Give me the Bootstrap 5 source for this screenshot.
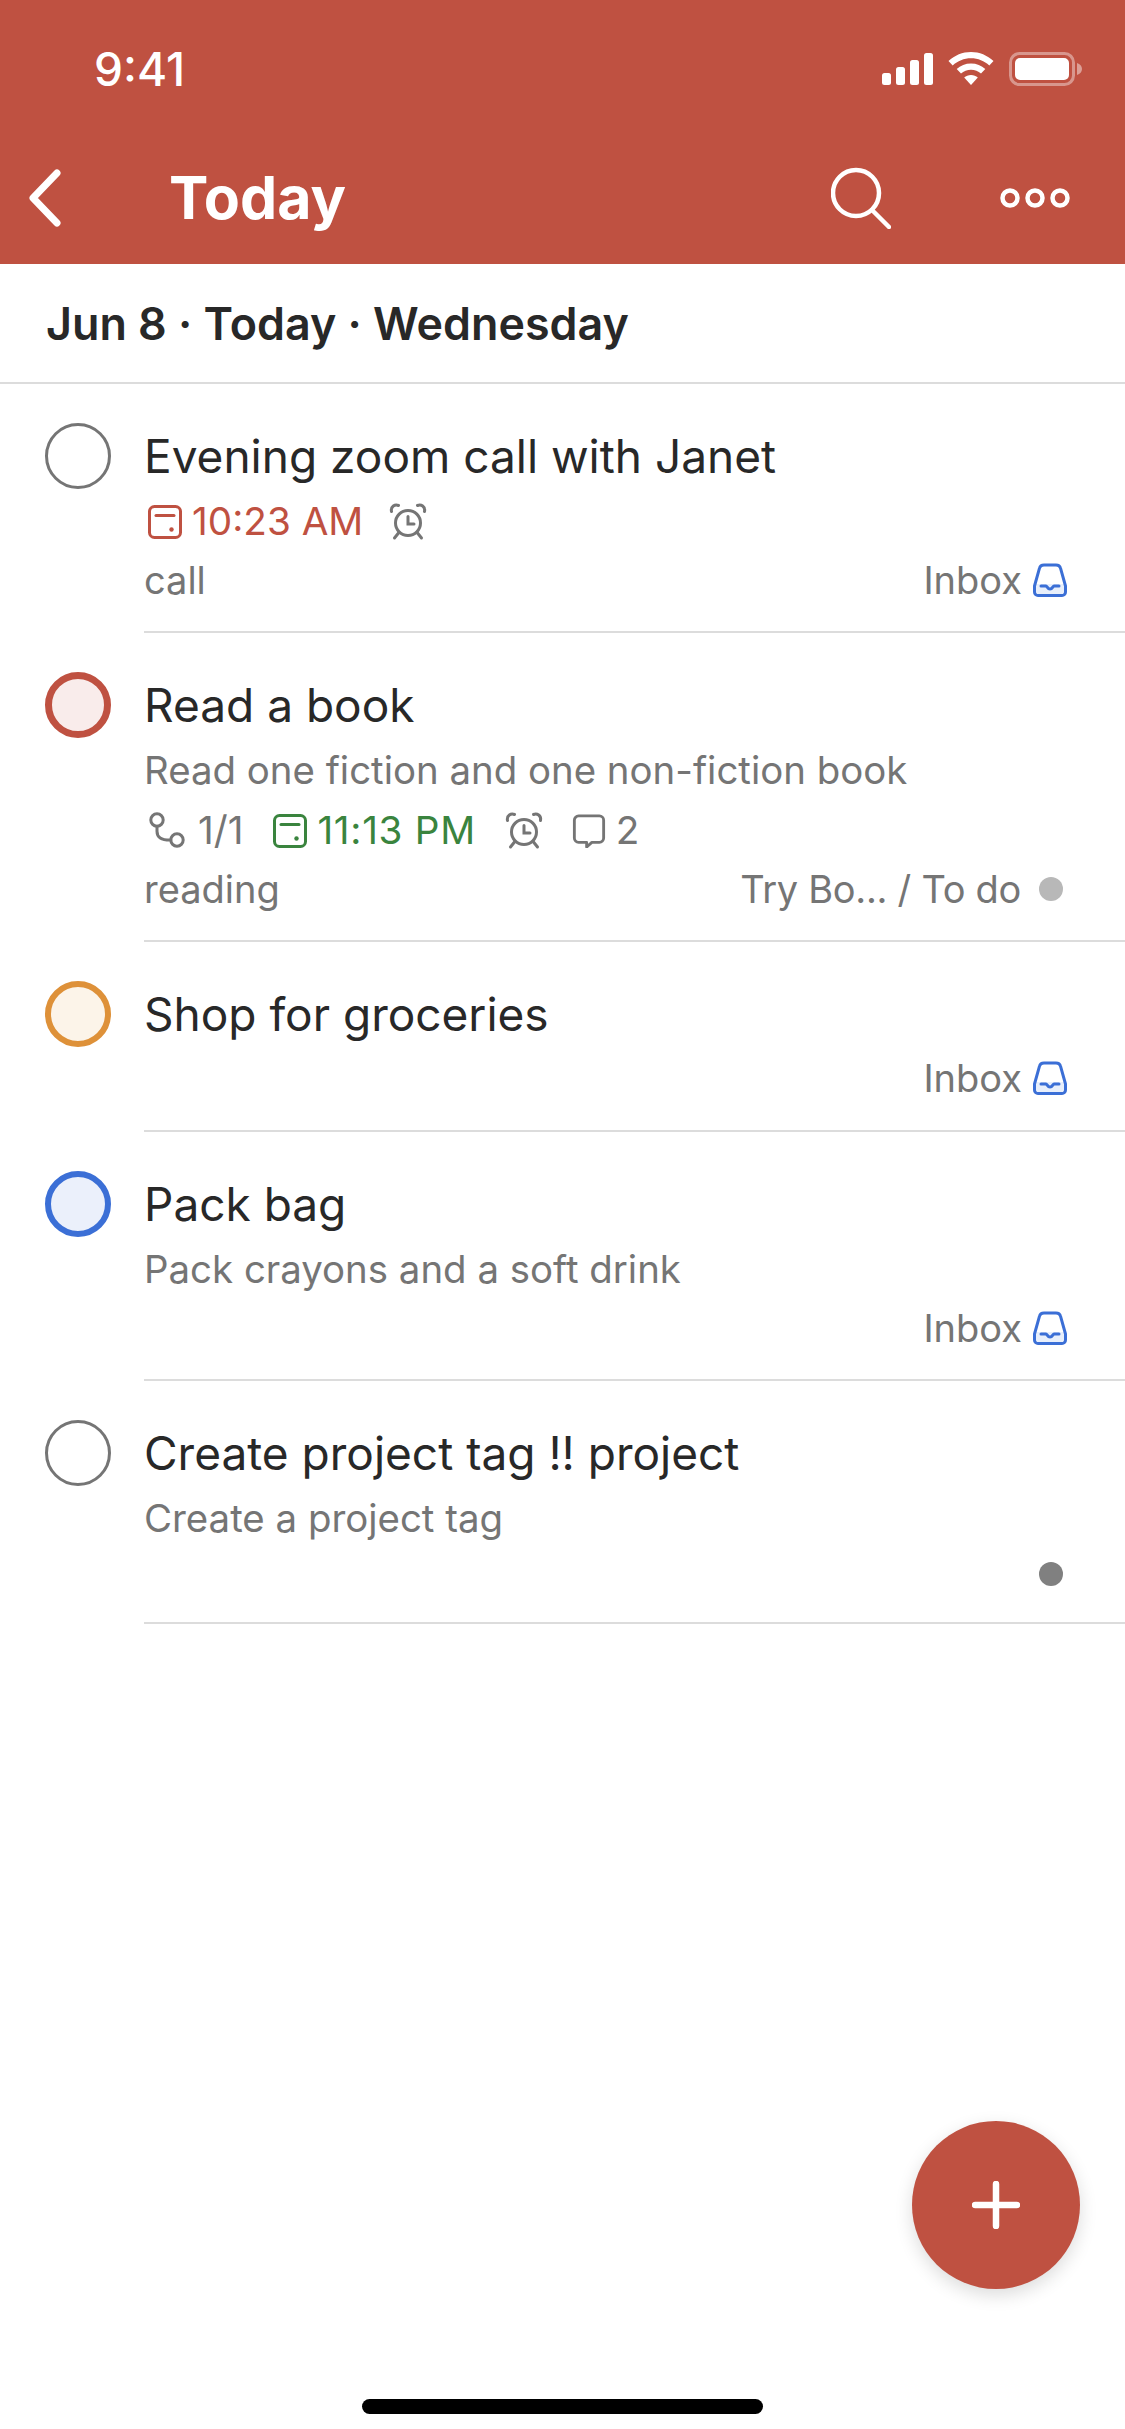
<!DOCTYPE html>
<html lang="en">
<head>
  <meta charset="UTF-8">
  <title>Today</title>
  <link href="https://cdn.jsdelivr.net/npm/bootstrap@5.3.0/dist/css/bootstrap.min.css" rel="stylesheet">
  <style>
    html, body {
      height: 100%;
      overflow: hidden;
    }
    body {
      font-family: Inter, "Liberation Sans", sans-serif;
      color: #282828;
      background: #fff;
    }
    .app-shell { height: 100vh; }

    /* Header */
    .top-bar { background: #bf5141; color: #fff; height: 264px; }
    .status-row { height: 137px; padding: 0 43px 0 94px; }
    .status-time { font-size: 46px; font-weight: 500; line-height: 1; }
    .status-gap { margin-left: 15px; }
    .nav-row { height: 127px; padding: 0 0 6px 29px; }
    .nav-title { font-size: 59px; font-weight: 700; line-height: 1; margin-left: 108px; }
    .nav-search { margin-right: 109px; }
    .nav-more { margin-right: 55px; }

    /* Date heading */
    .date-row {
      height: 120px;
      padding: 3px 0 0 46px;
      font-size: 44.8px;
      font-weight: 600;
      border-bottom: 2px solid #dcdcdc;
    }

    /* Tasks */
    .task-list { list-style: none; }
    .task-check {
      flex: 0 0 66px;
      width: 66px;
      height: 66px;
      margin: 39px 33px 0 45px;
      border-radius: 50%;
      border: 3px solid #757575;
    }
    .check-red { border: 7px solid #bf5141; background: #f9eceb; }
    .check-orange { border: 6px solid #de9139; background: #fcf4e9; }
    .check-blue { border: 6px solid #3b6fd6; background: #ebf0fb; }
    .task-body {
      padding: 40px 58px 21px 0;
      border-bottom: 2px solid #dcdcdc;
    }
    .task-body.body-tall { padding-bottom: 22px; }
    .task-title { font-size: 46px; line-height: 64px; margin-bottom: 2px; }
    .task-line {
      height: 60px;
      font-size: 38px;
      color: #757575;
    }
    .task-line.short-line { height: 54px; }
    .task-desc { font-size: 38.4px; padding-top: 3px; }
    .meta-row { padding-top: 3px; }
    .meta-first { margin-left: 4px; }
    .meta-group { margin-right: 28px; }
    .meta-group.meta-tight { margin-right: 25px; }
    .meta-group.meta-wide { margin-right: 30px; }
    .meta-time { font-size: 38.7px; }
    .meta-icon { width: 34px; height: 34px; margin-right: 10px; flex: none; }
    .branch-icon { width: 38px; height: 38px; margin-right: 12px; }
    .alarm-icon { width: 40px; height: 40px; }
    .text-overdue { color: #bf5141; }
    .text-later { color: #3a843e; letter-spacing: .7px; }
    .project-name { letter-spacing: -.3px; }
    .project-icon { width: 34px; height: 34px; margin-left: 11px; }
    .project-dot {
      width: 24px;
      height: 24px;
      border-radius: 50%;
      margin: 0 4px 0 18px;
      background: #b8b8b8;
    }
    .dot-dark { background: #808080; }

    /* Floating add button */
    .fab-add {
      right: 45px;
      top: 2121px;
      width: 168px;
      height: 168px;
      background: #bf5141;
      box-shadow: 0 6px 18px rgba(0, 0, 0, .14);
    }
    .home-bar {
      width: 401px;
      height: 15px;
      margin-bottom: 15px;
      background: #000;
    }
  </style>
</head>
<body>
  <svg width="0" height="0" class="position-absolute">
    <defs>
      <symbol id="i-date" viewBox="0 0 34 34" fill="none" stroke="currentColor">
        <rect x="1.500" y="1.500" width="31" height="31" rx="5" stroke-width="3"/>
        <path d="M8 10.500h18" stroke-width="3" stroke-linecap="round"/>
        <circle cx="23.500" cy="24.500" r="2.200" fill="currentColor" stroke="none"/>
      </symbol>
      <symbol id="i-alarm" viewBox="0 0 40 40" fill="none" stroke="#757575" stroke-width="3" stroke-linecap="round">
        <circle cx="20" cy="21" r="12.500"/>
        <path d="M20 14.500V22h6"/>
        <path d="M3.500 9.500C2.500 4.500 7 2 10.500 3.500"/>
        <path d="M36.500 9.500C37.500 4.500 33 2 29.500 3.500"/>
        <path d="M10.500 31L6.500 36M29.500 31l4 5"/>
      </symbol>
      <symbol id="i-branch" viewBox="0 0 38 38" fill="none" stroke="#757575" stroke-width="3">
        <circle cx="9" cy="8" r="6.200"/>
        <circle cx="29" cy="28" r="6.200"/>
        <path d="M9 14.200v5c0 6 4 9 13.800 8.800" stroke-linecap="round"/>
      </symbol>
      <symbol id="i-comment" viewBox="0 0 34 36" fill="none" stroke="#757575" stroke-width="3" stroke-linejoin="round">
        <path d="M6 2h22a4.500 4.500 0 0 1 4.500 4.500v19a4.500 4.500 0 0 1-4.500 4.500h-8l-5.500 5v-5H6a4.500 4.500 0 0 1-4.500-4.500v-19A4.500 4.500 0 0 1 6 2z"/>
      </symbol>
      <symbol id="i-inbox" viewBox="0 0 34 34" fill="none">
        <path d="M3 21h28v8a3 3 0 0 1-3 3H6a3 3 0 0 1-3-3z" fill="#e8effb"/>
        <path d="M11 2h12c2.500 0 4 1.200 4.500 3.200L32.500 23v6a3.500 3.500 0 0 1-3.500 3.500H5A3.500 3.500 0 0 1 1.500 29v-6L6.500 5.200C7 3.200 8.500 2 11 2z" stroke="#3b6fd6" stroke-width="3" stroke-linejoin="round"/>
        <path d="M8 23h5c1.200 0 1.500 3 4 3s2.800-3 4-3h5" stroke="#3b6fd6" stroke-width="3" stroke-linecap="round"/>
      </symbol>
    </defs>
  </svg>

  <div class="app-shell d-flex flex-column position-relative">
    <header class="top-bar flex-shrink-0">
      <div class="status-row d-flex align-items-center justify-content-between">
        <span class="status-time">9:41</span>
        <div class="d-flex align-items-center">
          <svg width="51" height="32" viewBox="0 0 51 32" fill="#fff">
            <rect x="0" y="20" width="9" height="12" rx="2.500"/>
            <rect x="14" y="14" width="9" height="18" rx="2.500"/>
            <rect x="28" y="7" width="9" height="25" rx="2.500"/>
            <rect x="42" y="0" width="9" height="32" rx="2.500"/>
          </svg>
          <svg class="status-gap" width="46" height="33" viewBox="0 0 46 33" fill="#fff">
            <path d="M23 0C14.500 0 6.700 3.300 0.500 9l4.200 4.500C9.700 9 16 6.300 23 6.300S36.300 9 41.300 13.500L45.500 9C39.300 3.300 31.500 0 23 0z"/>
            <path d="M23 11.500c-5.500 0-10.500 2-14.300 5.500l4.300 4.500c2.700-2.400 6.200-3.800 10-3.800s7.300 1.400 10 3.800l4.300-4.500c-3.800-3.500-8.800-5.500-14.300-5.500z"/>
            <path d="M23 23c-2.700 0-5 1-6.800 2.600L23 33l6.800-7.400C28 24 25.700 23 23 23z"/>
          </svg>
          <svg class="status-gap" width="73" height="34" viewBox="0 0 73 34" fill="none">
            <rect x="1.500" y="1.500" width="63" height="31" rx="9" stroke="#fff" stroke-opacity=".4" stroke-width="3"/>
            <rect x="6" y="6" width="54" height="22" rx="5" fill="#fff"/>
            <path d="M68 11c3 1 5 3 5 6s-2 5-5 6z" fill="#fff" fill-opacity=".45"/>
          </svg>
        </div>
      </div>
      <nav class="nav-row d-flex align-items-center">
        <svg width="32" height="58" viewBox="0 0 32 58" fill="none" stroke="#fff" stroke-width="7" stroke-linecap="round" stroke-linejoin="round">
          <path d="M28 4L4 29l24 25"/>
        </svg>
        <span class="nav-title flex-grow-1">Today</span>
        <svg class="nav-search" width="60" height="62" viewBox="0 0 60 62" fill="none" stroke="#fff" stroke-width="4.500" stroke-linecap="round">
          <circle cx="25" cy="26" r="23"/>
          <path d="M41 43l17 17"/>
        </svg>
        <svg class="nav-more" width="70" height="22" viewBox="0 0 70 22" fill="none" stroke="#fff" stroke-width="4.500">
          <circle cx="10" cy="11" r="7.500"/>
          <circle cx="35" cy="11" r="7.500"/>
          <circle cx="60" cy="11" r="7.500"/>
        </svg>
      </nav>
    </header>

    <div class="date-row d-flex align-items-center flex-shrink-0">Jun 8 · Today · Wednesday</div>

    <ul class="task-list m-0 p-0">
      <li class="d-flex align-items-start">
        <div class="task-check"></div>
        <div class="task-body flex-grow-1">
          <div class="task-title">Evening zoom call with Janet</div>
          <div class="task-line meta-row d-flex align-items-center">
            <span class="meta-first meta-group meta-tight meta-time d-flex align-items-center text-overdue">
              <svg class="meta-icon"><use href="#i-date"/></svg>10:23 AM
            </span>
            <svg class="alarm-icon"><use href="#i-alarm"/></svg>
          </div>
          <div class="task-line d-flex align-items-center justify-content-between">
            <span>call</span>
            <span class="d-flex align-items-center">Inbox<svg class="project-icon"><use href="#i-inbox"/></svg></span>
          </div>
        </div>
      </li>
      <li class="d-flex align-items-start">
        <div class="task-check check-red"></div>
        <div class="task-body flex-grow-1">
          <div class="task-title">Read a book</div>
          <div class="task-line task-desc d-flex align-items-center">Read one fiction and one non-fiction book</div>
          <div class="task-line meta-row d-flex align-items-center">
            <span class="meta-first meta-group meta-wide meta-time d-flex align-items-center">
              <svg class="meta-icon branch-icon"><use href="#i-branch"/></svg>1/1
            </span>
            <span class="meta-group meta-time d-flex align-items-center text-later">
              <svg class="meta-icon"><use href="#i-date"/></svg>11:13 PM
            </span>
            <svg class="alarm-icon meta-group"><use href="#i-alarm"/></svg>
            <span class="meta-time d-flex align-items-center">
              <svg class="meta-icon"><use href="#i-comment"/></svg>2
            </span>
          </div>
          <div class="task-line d-flex align-items-center justify-content-between">
            <span>reading</span>
            <span class="d-flex align-items-center"><span class="project-name">Try Bo... / To do</span><span class="project-dot"></span></span>
          </div>
        </div>
      </li>
      <li class="d-flex align-items-start">
        <div class="task-check check-orange"></div>
        <div class="task-body body-tall flex-grow-1">
          <div class="task-title">Shop for groceries</div>
          <div class="task-line d-flex align-items-center justify-content-end">
            Inbox<svg class="project-icon"><use href="#i-inbox"/></svg>
          </div>
        </div>
      </li>
      <li class="d-flex align-items-start">
        <div class="task-check check-blue"></div>
        <div class="task-body flex-grow-1">
          <div class="task-title">Pack bag</div>
          <div class="task-line task-desc d-flex align-items-center">Pack crayons and a soft drink</div>
          <div class="task-line d-flex align-items-center justify-content-end">
            Inbox<svg class="project-icon"><use href="#i-inbox"/></svg>
          </div>
        </div>
      </li>
      <li class="d-flex align-items-start">
        <div class="task-check"></div>
        <div class="task-body flex-grow-1">
          <div class="task-title">Create project tag !! project</div>
          <div class="task-line task-desc d-flex align-items-center">Create a project tag</div>
          <div class="task-line short-line d-flex align-items-center justify-content-end">
            <span class="project-dot dot-dark"></span>
          </div>
        </div>
      </li>
    </ul>

    <button type="button" class="fab-add btn position-absolute rounded-circle border-0 p-0 d-flex align-items-center justify-content-center">
      <svg width="48" height="48" viewBox="0 0 48 48" stroke="#fff" stroke-width="6.500" stroke-linecap="round">
        <path d="M24 3v42M3 24h42"/>
      </svg>
    </button>

    <div class="home-bar rounded-pill mt-auto mx-auto"></div>
  </div>

  <script src="https://cdn.jsdelivr.net/npm/bootstrap@5.3.0/dist/js/bootstrap.bundle.min.js"></script>
</body>
</html>
